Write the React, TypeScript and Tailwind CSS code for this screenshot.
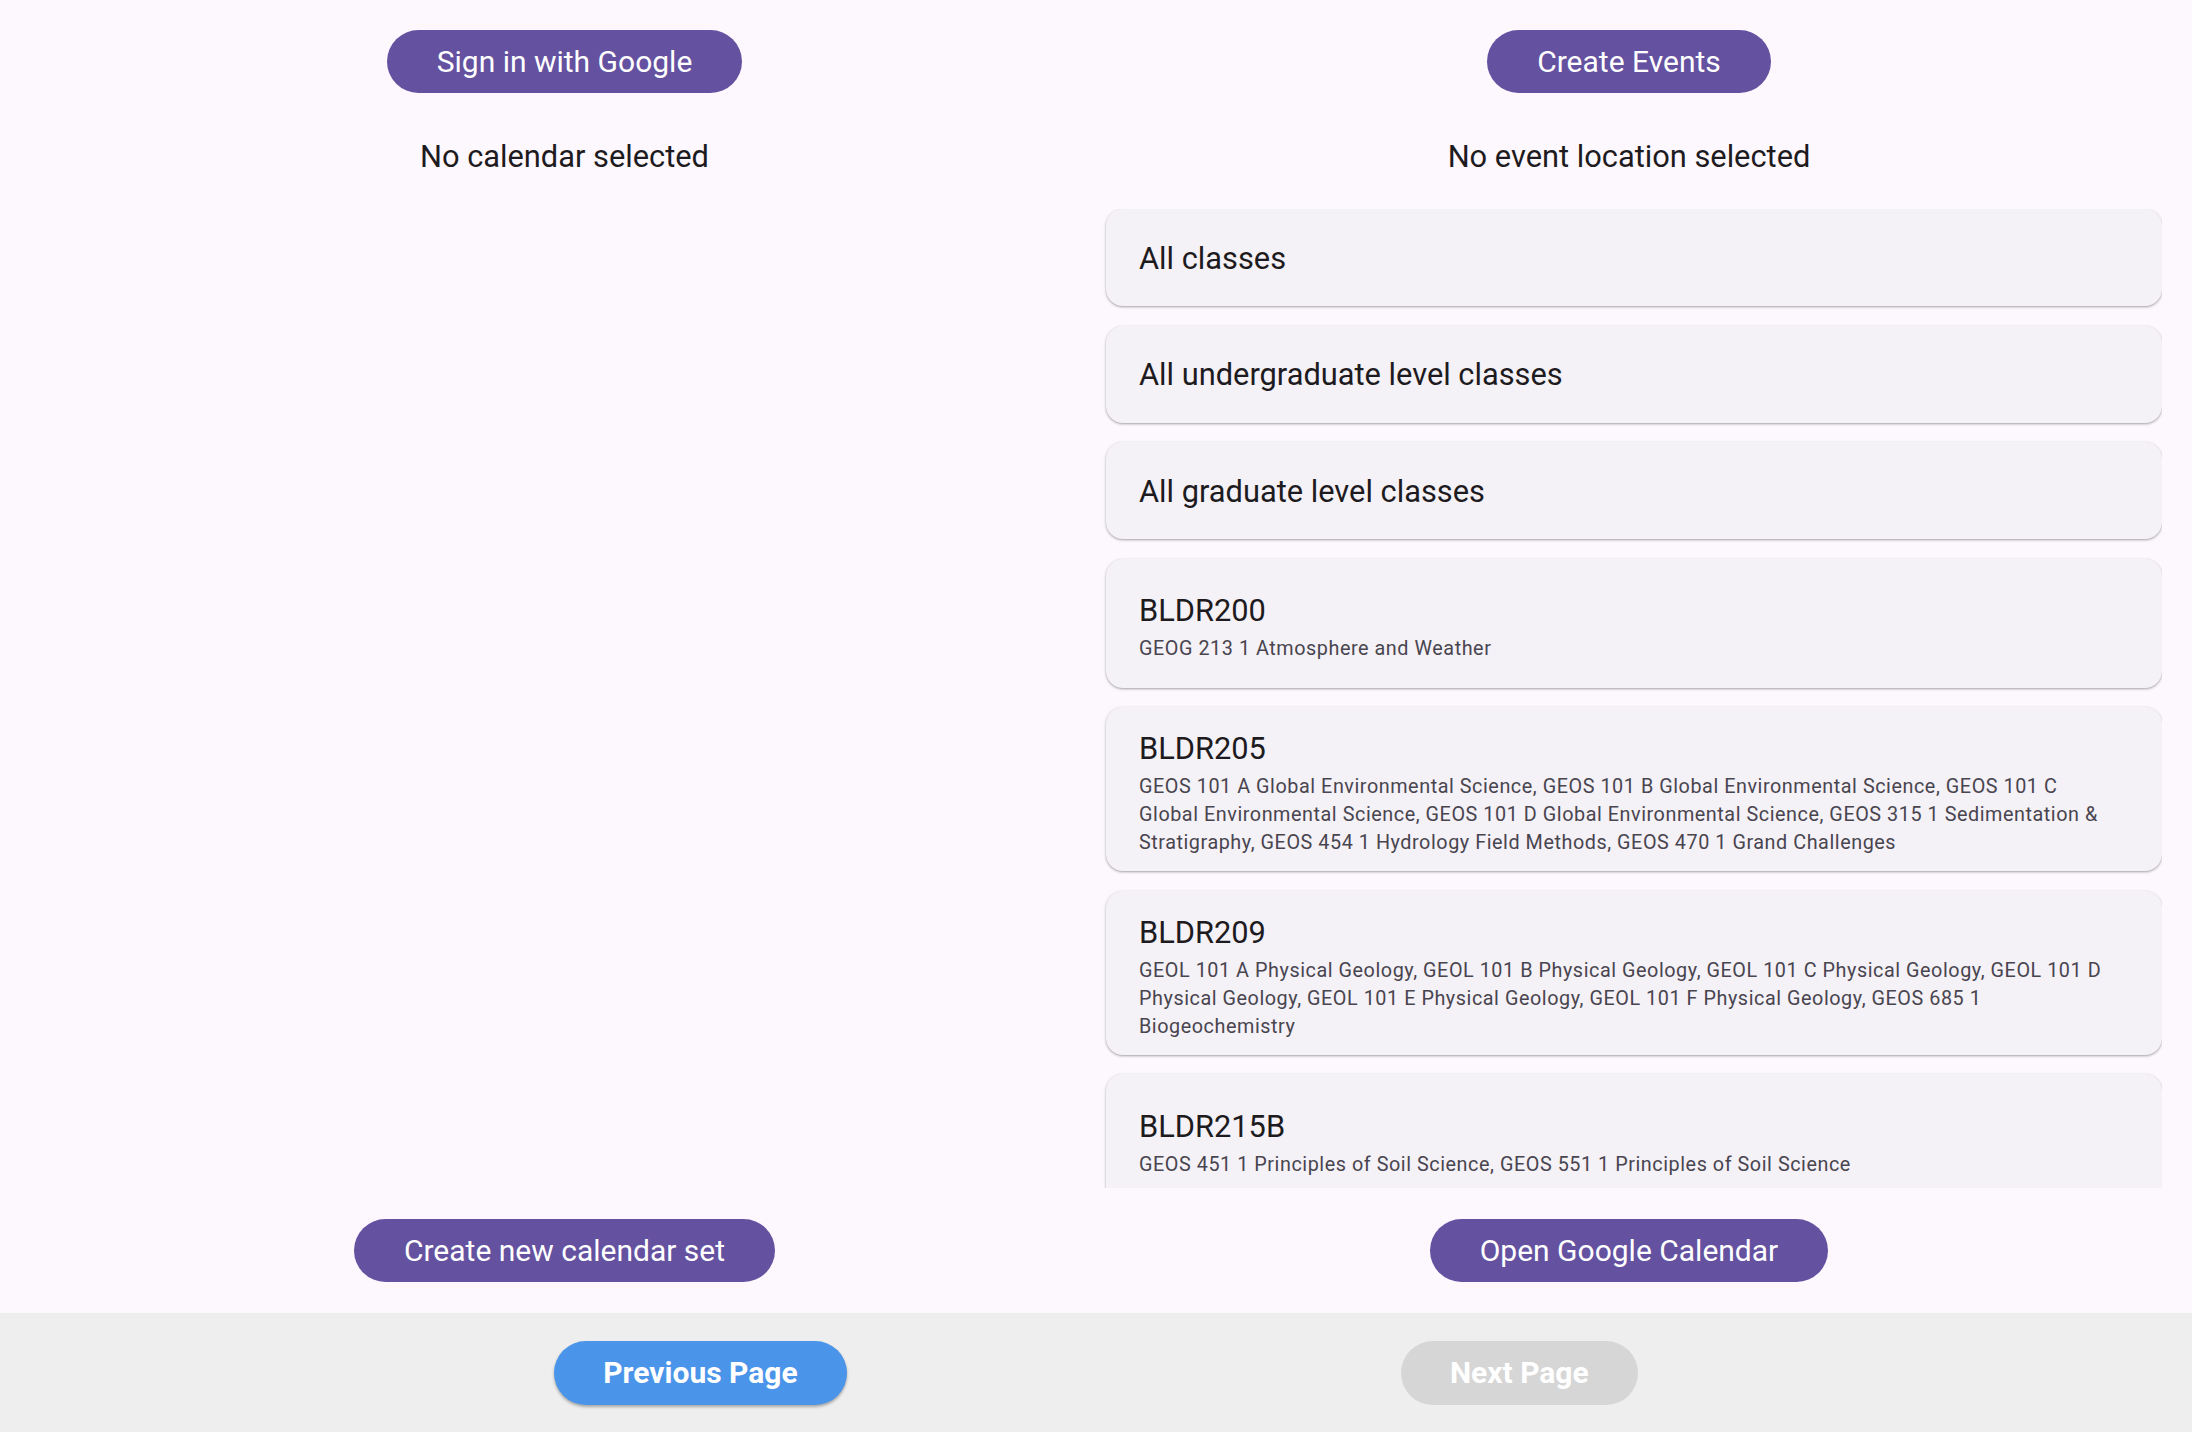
const locations = [
  { id: "all", title: "All classes" },
  { id: "undergrad", title: "All undergraduate level classes" },
  { id: "grad", title: "All graduate level classes" },
  {
    id: "BLDR200",
    title: "BLDR200",
    classes: "GEOG 213 1 Atmosphere and Weather",
  },
  {
    id: "BLDR205",
    title: "BLDR205",
    classes:
      "GEOS 101 A Global Environmental Science, GEOS 101 B Global Environmental Science, GEOS 101 C Global Environmental Science, GEOS 101 D Global Environmental Science, GEOS 315 1 Sedimentation & Stratigraphy, GEOS 454 1 Hydrology Field Methods, GEOS 470 1 Grand Challenges",
  },
  {
    id: "BLDR209",
    title: "BLDR209",
    classes:
      "GEOL 101 A Physical Geology, GEOL 101 B Physical Geology, GEOL 101 C Physical Geology, GEOL 101 D Physical Geology, GEOL 101 E Physical Geology, GEOL 101 F Physical Geology, GEOS 685 1 Biogeochemistry",
  },
  {
    id: "BLDR215B",
    title: "BLDR215B",
    classes: "GEOS 451 1 Principles of Soil Science, GEOS 551 1 Principles of Soil Science",
  },
];

function PillButton({ label }: { label: string }) {
  return (
    <button className="h-[63px] shrink-0 rounded-full bg-[#6451a0] px-[50px] text-[30px] leading-none text-white">
      {label}
    </button>
  );
}

function LocationCard({ title, classes }: { title: string; classes?: string }) {
  if (!classes) {
    return (
      <div className="flex h-[97px] shrink-0 items-center rounded-[17px] bg-[#f4f1f7] px-[33px] pt-[2px] shadow-[0_1px_2px_rgba(0,0,0,0.25),0_1px_3px_1px_rgba(0,0,0,0.08)]">
        <span className="text-[30.8px] leading-[36px] text-[#1d1b20]">{title}</span>
      </div>
    );
  }
  return (
    <div className="flex min-h-[129px] shrink-0 flex-col justify-center rounded-[17px] bg-[#f4f1f7] px-[33px] pt-[24px] pb-[14px] shadow-[0_1px_2px_rgba(0,0,0,0.25),0_1px_3px_1px_rgba(0,0,0,0.08)]">
      <span className="text-[30.8px] leading-[36px] text-[#1d1b20]">{title}</span>
      <p className="mt-[6px] max-w-[976px] text-[19.8px] leading-[28px] tracking-[0.55px] text-[#49454f]">
        {classes}
      </p>
    </div>
  );
}

export default function App() {
  return (
    <div className="flex h-[1432px] w-[2192px] flex-col overflow-hidden bg-[#fdf7fe] font-['Roboto',sans-serif]">
      <div className="flex min-h-0 flex-1">
        {/* calendar column */}
        <div className="flex w-[1096px] flex-col items-center pt-[30px] pb-[31px] pl-[33px]">
          <PillButton label="Sign in with Google" />
          <p className="mt-[44px] text-[30.8px] leading-[40px] text-[#1d1b20]">No calendar selected</p>
          <div className="flex-1" />
          <PillButton label="Create new calendar set" />
        </div>

        {/* event location column */}
        <div className="flex min-w-0 flex-1 flex-col items-center pt-[30px] pb-[31px] pr-[30px]">
          <PillButton label="Create Events" />
          <p className="mt-[44px] text-[30.8px] leading-[40px] text-[#1d1b20]">No event location selected</p>
          <div className="mt-[32px] mb-[31px] flex min-h-0 w-full flex-1 flex-col gap-[19.5px] overflow-hidden pl-[10px]">
            {locations.map((loc) => (
              <LocationCard key={loc.id} title={loc.title} classes={loc.classes} />
            ))}
          </div>
          <PillButton label="Open Google Calendar" />
        </div>
      </div>

      <div className="flex h-[119px] shrink-0 items-center justify-evenly bg-[#eeeeee]">
        <button className="h-[64px] rounded-full bg-[#4a94e9] px-[49px] text-[30px] font-bold leading-none text-white shadow-[0_2px_3px_rgba(0,0,0,0.3)]">
          Previous Page
        </button>
        <button className="h-[64px] rounded-full bg-[#d6d6d6] px-[49px] text-[30px] font-bold leading-none text-white">
          Next Page
        </button>
      </div>
    </div>
  );
}
